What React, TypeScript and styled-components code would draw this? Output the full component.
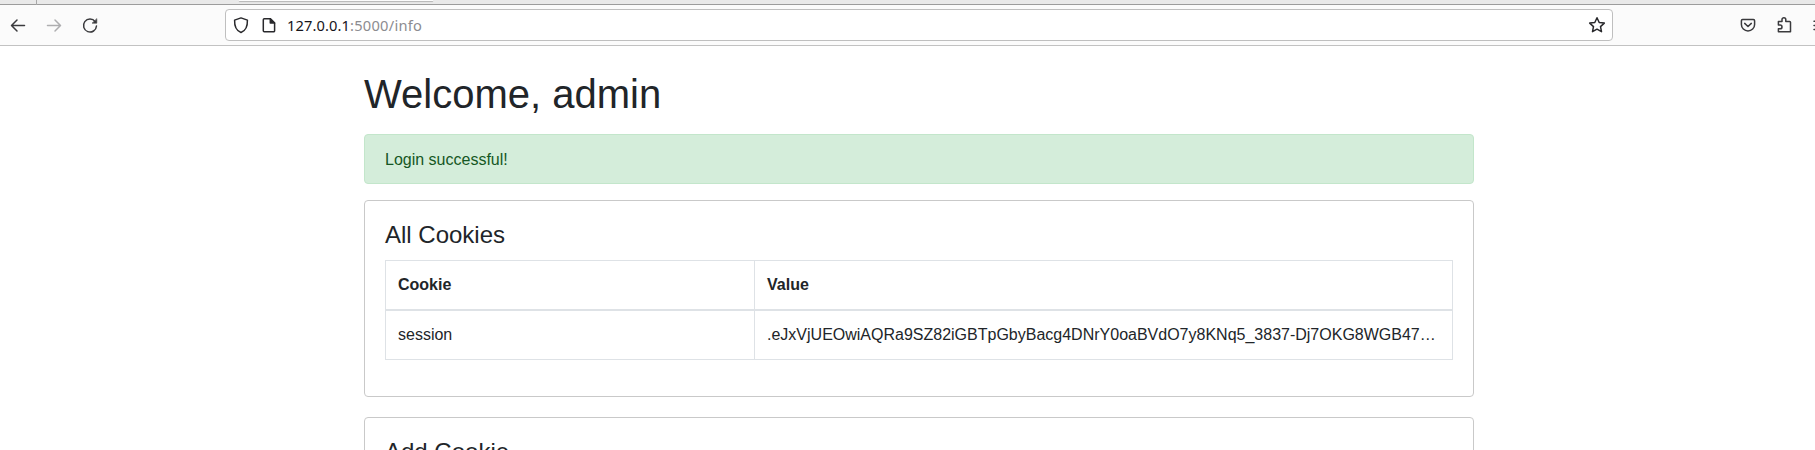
import React from "react";
import styled, { createGlobalStyle } from "styled-components";

const GlobalStyle = createGlobalStyle`
  * { box-sizing: border-box; }
  body {
    margin: 0;
    background: #fff;
    color: #212529;
    font: 16px/24px "Liberation Sans", Arial, sans-serif;
  }
`;

const Screen = styled.div`
  height: 450px;
  overflow: hidden;
`;

const TabStrip = styled.div`
  display: flex;
  align-items: flex-start;
  height: 5px;
  background: #e9e9e9;
  border-bottom: 1px solid #9c9c9c;
`;

const PinnedArea = styled.div`
  width: 37px;
  height: 5px;
  border-right: 1px solid #a8a8a8;
`;

const ActiveTab = styled.div`
  width: 194px;
  height: 1px;
  margin-left: 202px;
  background: #fbfbfb;
  box-shadow: 0 1px 1px #b0b0b0;
`;

const Toolbar = styled.div`
  display: flex;
  align-items: center;
  height: 41px;
  padding-left: 8px;
  background: #fbfbfb;
  border-bottom: 1px solid #c2c2c2;
  overflow: hidden;
`;

const Icon = styled.svg<{ $gap?: number; $color?: string }>`
  flex: none;
  width: 20px;
  height: 20px;
  margin-left: ${(p) => p.$gap ?? 0}px;
  fill: none;
  stroke: ${(p) => p.$color ?? "#3a3a3d"};
  stroke-width: 1.5;
  stroke-linecap: round;
  stroke-linejoin: round;
`;

const AddressBar = styled.div`
  display: flex;
  flex: none;
  align-items: center;
  width: 1388px;
  height: 32px;
  margin-left: 125px;
  padding: 0 5px;
  background: #fff;
  border: 1px solid #bfbfbf;
  border-radius: 4px;
`;

const Url = styled.div`
  flex: 1;
  margin-left: 8px;
  color: #8c8c90;
  font: 14.67px/20px "Noto Sans", sans-serif;
  letter-spacing: 0.25px;
`;

const Host = styled.span`
  color: #15141a;
  letter-spacing: 0.1px;
`;

const Container = styled.main`
  width: 1110px;
  margin-left: 364px;
  padding-top: 32px;
`;

const Heading = styled.h1`
  margin: -8px 0 16px;
  font-size: 40px;
  font-weight: 400;
  line-height: 48px;
`;

const Alert = styled.div`
  margin-bottom: 16px;
  padding: 13px 20px 11px;
  color: #155724;
  background: #d4edda;
  border: 1px solid #c3e6cb;
  border-radius: 4px;
`;

const Card = styled.section`
  margin-bottom: 20px;
  padding: 20px;
  border: 1px solid #c9c9c9;
  border-radius: 4px;
`;

const CardTitle = styled.h2`
  margin: -1px 0 11px;
  font-size: 24px;
  font-weight: 400;
  line-height: 29px;
`;

const Table = styled.table`
  width: 1068px;
  margin-bottom: 16px;
  table-layout: fixed;
  border-spacing: 0;
  border-right: 1px solid #dee2e6;
  border-bottom: 1px solid #dee2e6;
`;

const HeadCell = styled.th<{ $width?: number }>`
  width: ${(p) => (p.$width ? `${p.$width}px` : "auto")};
  padding: 12px;
  text-align: left;
  border: 0 solid #dee2e6;
  border-width: 1px 0 0 1px;
`;

const Cell = styled.td`
  padding: 12px;
  overflow: hidden;
  text-overflow: ellipsis;
  white-space: nowrap;
  border: 0 solid #dee2e6;
  border-width: 2px 0 0 1px;
`;

export default function App() {
  return (
    <Screen>
      <GlobalStyle />
      <TabStrip>
        <PinnedArea />
        <ActiveTab />
      </TabStrip>
      <Toolbar>
        <Icon viewBox="0 0 20 20">
          <path d="M16.5 10.5H3.8M9 5 3.5 10.5 9 16" />
        </Icon>
        <Icon $gap={16} $color="#aeaeb0" viewBox="0 0 20 20">
          <path d="M3.5 10.5H16.2M11 5 16.5 10.5 11 16" />
        </Icon>
        <Icon $gap={16} viewBox="0 0 20 20">
          <path d="M15.2 6.6A6.5 6.5 0 1 0 16.5 11" />
          <path d="M16.8 4v4.2h-4.4z" fill="#3a3a3d" strokeWidth="0.6" />
        </Icon>
        <AddressBar>
          <Icon $color="#29292c" viewBox="0 0 20 20">
            <path d="M10 2.9 16.4 5.1C16.6 10.3 15.3 15.5 10 17.5 4.7 15.5 3.4 10.3 3.6 5.1Z" />
          </Icon>
          <Icon $gap={8} $color="#29292c" viewBox="0 0 20 20">
            <path d="M5.3 3.8h6L15.6 8v7.7a1 1 0 0 1-1 1H5.3a1 1 0 0 1-1-1V4.8a1 1 0 0 1 1-1Z" />
            <path d="M11.3 3.8V8h4.3Z" fill="#29292c" />
          </Icon>
          <Url>
            <Host>127.0.0.1</Host>:5000/info
          </Url>
          <Icon $color="#29292c" viewBox="0 0 20 20">
            <path d="m10 2.8 2.2 4.7 5.1.6-3.8 3.5 1 5.1-4.5-2.5-4.5 2.5 1-5.1-3.8-3.5 5.1-.6Z" />
          </Icon>
        </AddressBar>
        <Icon $gap={125} viewBox="0 0 20 20">
          <path d="M4.6 4.5h10.8a1.2 1.2 0 0 1 1.2 1.2v3.7a6.6 6.6 0 0 1-13.2 0V5.7a1.2 1.2 0 0 1 1.2-1.2ZM6.7 8.4 10 11.5l3.3-3.1" />
        </Icon>
        <Icon $gap={16} viewBox="0 0 20 20">
          <path d="M4.4 6.4H8V4.6a1.9 1.9 0 0 1 3.8 0v1.8h3.8a.9.9 0 0 1 .9.9v9.4H4.4v-2.9h1.7a1.9 1.9 0 0 0 0-3.8H4.4Z" />
        </Icon>
        <Icon $gap={17} viewBox="0 0 20 20">
          <path d="M3 6.2h14M3 10.5h14M3 14.6h14" />
        </Icon>
      </Toolbar>
      <Container>
        <Heading>Welcome, admin</Heading>
        <Alert>Login successful!</Alert>
        <Card>
          <CardTitle>All Cookies</CardTitle>
          <Table>
            <thead>
              <tr>
                <HeadCell $width={369}>Cookie</HeadCell>
                <HeadCell>Value</HeadCell>
              </tr>
            </thead>
            <tbody>
              <tr>
                <Cell>session</Cell>
                <Cell>.eJxVjUEOwiAQRa9SZ82iGBTpGbyBacg4DNrY0oaBVdO7y8KNq5_3837-Dj7OKG8WGB47…</Cell>
              </tr>
            </tbody>
          </Table>
        </Card>
        <Card>
          <CardTitle>Add Cookie</CardTitle>
        </Card>
      </Container>
    </Screen>
  );
}
